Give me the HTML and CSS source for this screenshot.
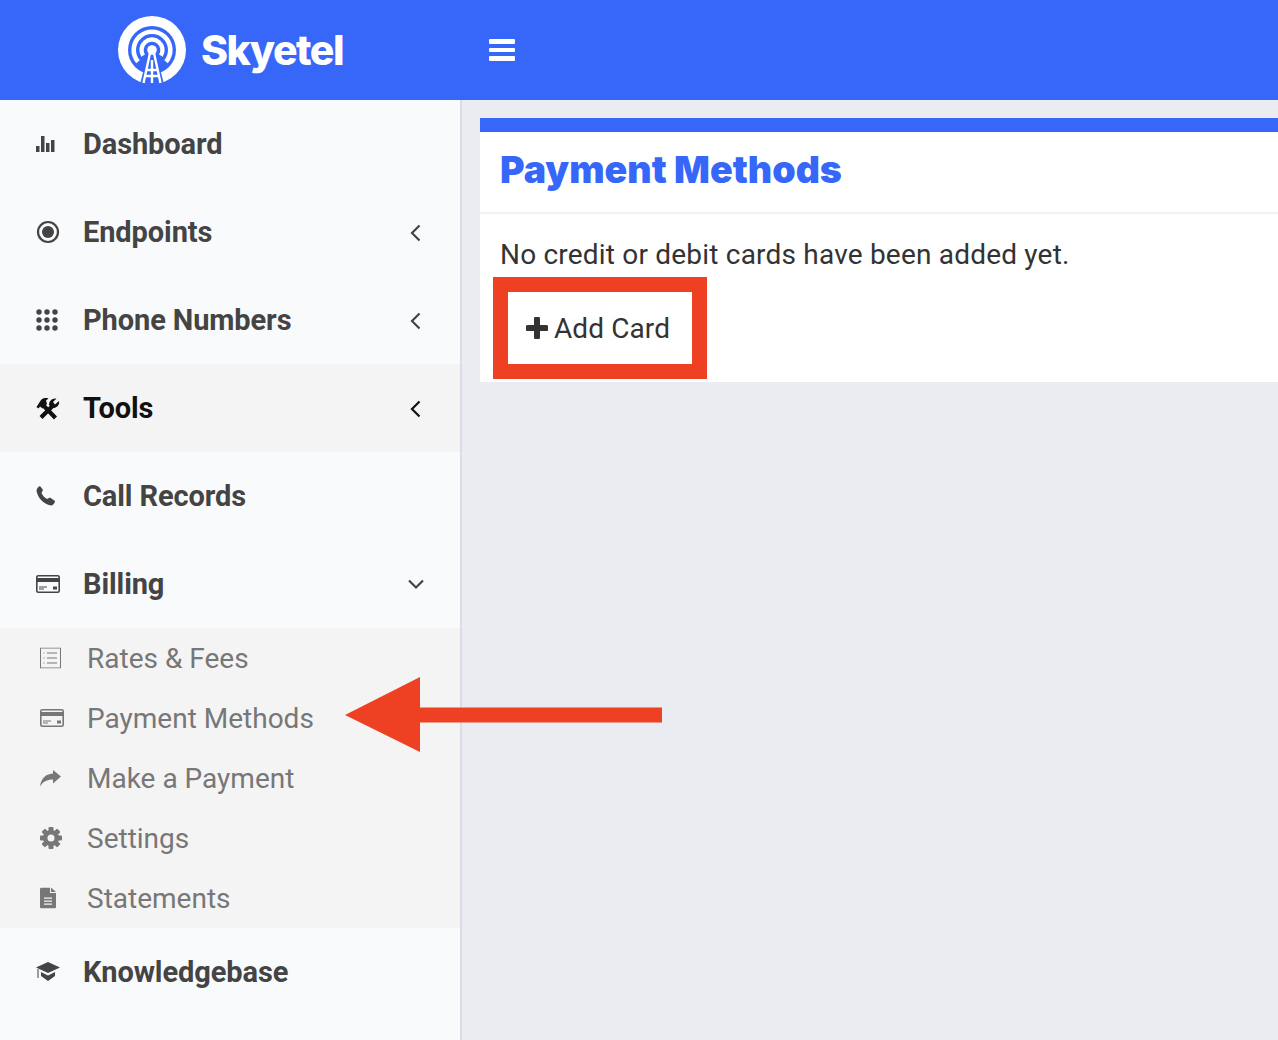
FILE: index.html
```html
<!DOCTYPE html>
<html lang="en">
<head>
  <meta charset="UTF-8" />
  <title>Payment Methods</title>
  <link rel="stylesheet" href="styles.css">
</head>
<body>
  <header class="topbar">
    <div class="brand">
      <svg class="brand-logo" viewBox="0 0 68 68" width="68" height="68">
        <circle cx="34" cy="34" r="34" fill="#fff"/>
        <circle cx="34" cy="34" r="24" fill="#3667f9"/>
        <path d="M20 45.800 A18.300 18.300 0 1 1 48 45.800" fill="none" stroke="#fff" stroke-width="4.600"/>
        <path d="M25.100 39.600 A10.500 10.500 0 1 1 42.900 39.600" fill="none" stroke="#fff" stroke-width="4.400"/>
        <path d="M22 68 L30 38 H38 L46 68 Z" fill="#3667f9"/>
        <circle cx="34" cy="34" r="4.800" fill="#fff"/>
        <path d="M32 37 L25.500 67 M36 37 L42.500 67 M34 44 V67 M29 54 H39 M27.500 60 H40.500" stroke="#fff" stroke-width="2.400" fill="none"/>
      </svg>
      <span class="brand-name">Skyetel</span>
    </div>
    <button class="menu-toggle" aria-label="Menu"><span></span><span></span><span></span></button>
  </header>

  <div class="layout">
    <nav class="sidebar">
      <a class="nav-item">
        <svg class="nav-icon" viewBox="0 0 20 20" width="20" height="20"><path d="M0 12h3.500v6H0zM5 2h3.500v16H5zM10 9h3.500v9H10zM15 6h3.500v12H15z" fill="currentColor"/></svg>
        <span>Dashboard</span>
      </a>
      <a class="nav-item">
        <svg class="nav-icon" viewBox="0 0 24 24" width="24" height="24"><circle cx="12" cy="12" r="10" fill="none" stroke="currentColor" stroke-width="2.200"/><circle cx="12" cy="12" r="6" fill="currentColor"/></svg>
        <span>Endpoints</span>
        <svg class="chev" viewBox="0 0 12 18" width="12" height="18"><path d="M10.500 1.500 L3 9 L10.500 16.500" fill="none" stroke="currentColor" stroke-width="2.200"/></svg>
      </a>
      <a class="nav-item">
        <svg class="nav-icon" viewBox="0 0 22 22" width="22" height="22" fill="currentColor"><circle cx="3" cy="3" r="2.700"/><circle cx="11" cy="3" r="2.700"/><circle cx="19" cy="3" r="2.700"/><circle cx="3" cy="11" r="2.700"/><circle cx="11" cy="11" r="2.700"/><circle cx="19" cy="11" r="2.700"/><circle cx="3" cy="19" r="2.700"/><circle cx="11" cy="19" r="2.700"/><circle cx="19" cy="19" r="2.700"/></svg>
        <span>Phone Numbers</span>
        <svg class="chev" viewBox="0 0 12 18" width="12" height="18"><path d="M10.500 1.500 L3 9 L10.500 16.500" fill="none" stroke="currentColor" stroke-width="2.200"/></svg>
      </a>
      <a class="nav-item is-open">
        <svg class="nav-icon" viewBox="0 0 24 24" width="24" height="24" fill="currentColor"><path d="M7 9 L19.500 22 M5 21.500 L16.500 10" stroke="currentColor" stroke-width="4.200" fill="none"/><path d="M0.500 11 L5 4 C7 2 10 1.500 12.500 2.500 L10 4.500 L11 8 L6.500 12.500 L4 10.500 L2.500 12.500 Z"/><path d="M13 9 C13 5 16 2 20.500 2.500 L17 6 L19 8.500 L23 5 C24 9 20.500 12.500 16 12 Z"/></svg>
        <span>Tools</span>
        <svg class="chev" viewBox="0 0 12 18" width="12" height="18"><path d="M10.500 1.500 L3 9 L10.500 16.500" fill="none" stroke="currentColor" stroke-width="2.200"/></svg>
      </a>
      <a class="nav-item">
        <svg class="nav-icon" viewBox="0 0 20 20" width="20" height="20"><path d="M4 0 L7 4 L5.500 7 C6.500 9.500 8.500 11.500 11 13 L14 11.500 L19 15 C19 17 17 19.500 15 19.500 C7 18 2 12 0.500 5 C0.500 3 2 0.500 4 0 Z" fill="currentColor"/></svg>
        <span>Call Records</span>
      </a>
      <a class="nav-item">
        <svg class="nav-icon" viewBox="0 0 24 18" width="24" height="18"><rect x="0.800" y="0.800" width="22.400" height="16.400" rx="1.500" fill="none" stroke="currentColor" stroke-width="1.600"/><path d="M1 3h22v4H1zM3 11.500h8v1H3zM3 13.500h5v1H3zM17 11.500h4v3h-4z" fill="currentColor"/></svg>
        <span>Billing</span>
        <svg class="chev chev-down" viewBox="0 0 18 12" width="18" height="12"><path d="M2 2.500 L9 9.500 L16 2.500" fill="none" stroke="currentColor" stroke-width="2.200"/></svg>
      </a>

      <div class="subnav">
        <a class="sub-item">
          <svg class="sub-icon" viewBox="0 0 21 21" width="21" height="21"><rect x="0.500" y="0.500" width="20" height="20" fill="none" stroke="currentColor"/><path d="M7 5h10v1H7zM7 10h10v1H7zM7 15h10v1H7zM3.500 5h1v1h-1zM3.500 10h1v1h-1zM3.500 15h1v1h-1z" fill="currentColor"/></svg>
          <span>Rates &amp; Fees</span>
        </a>
        <a class="sub-item">
          <svg class="sub-icon" viewBox="0 0 24 18" width="24" height="18"><rect x="0.800" y="0.800" width="22.400" height="16.400" rx="1.500" fill="none" stroke="currentColor" stroke-width="1.600"/><path d="M1 3h22v4H1zM3 11.500h8v1H3zM3 13.500h5v1H3zM17 11.500h4v3h-4z" fill="currentColor"/></svg>
          <span>Payment Methods</span>
        </a>
        <a class="sub-item">
          <svg class="sub-icon" viewBox="0 0 21 18" width="21" height="18"><path d="M13 1 L21 7.500 L13 14.500 V10.500 C7 10.500 3 12.500 0 17.500 C1 10 5 5 13 4.500 Z" fill="currentColor"/></svg>
          <span>Make a Payment</span>
        </a>
        <a class="sub-item">
          <svg class="sub-icon" viewBox="0 0 22 22" width="22" height="22" fill="currentColor">
            <circle cx="11" cy="11" r="8"/>
            <rect x="8.500" y="0" width="5" height="22" rx="1"/>
            <rect x="8.500" y="0" width="5" height="22" rx="1" transform="rotate(45 11 11)"/>
            <rect x="8.500" y="0" width="5" height="22" rx="1" transform="rotate(90 11 11)"/>
            <rect x="8.500" y="0" width="5" height="22" rx="1" transform="rotate(135 11 11)"/>
            <circle cx="11" cy="11" r="3.500" fill="#f4f4f4"/>
          </svg>
          <span>Settings</span>
        </a>
        <a class="sub-item">
          <svg class="sub-icon" viewBox="0 0 16 21" width="16" height="21"><path d="M1.500 0 H10 V5.500 H16 V19.500 A1.500 1.500 0 0 1 14.500 21 H1.500 A1.500 1.500 0 0 1 0 19.500 V1.500 A1.500 1.500 0 0 1 1.500 0 Z M11 0 L16 4.500 H11 Z" fill="currentColor"/><path d="M4 10h8v1.300H4zM4 13h8v1.300H4zM4 16h8v1.300H4z" fill="#f4f4f4"/></svg>
          <span>Statements</span>
        </a>
      </div>

      <a class="nav-item">
        <svg class="nav-icon" viewBox="0 0 24 20" width="24" height="20" fill="currentColor"><path d="M12 0 L24 5.500 L12 11 L0 5.500 Z"/><path d="M5 10 L12 13.500 L19 10 V14 L12 19 L5 14 Z"/><path d="M1.500 7 H2.500 V16 H1.500 Z"/></svg>
        <span>Knowledgebase</span>
      </a>
    </nav>

    <main class="content">
      <section class="card">
        <h1 class="card-title">Payment Methods</h1>
        <div class="card-body">
          <p>No credit or debit cards have been added yet.</p>
          <button class="add-card">
            <svg viewBox="0 0 22 22" width="22" height="22"><path d="M11 2 V20 M2 11 H20" stroke="currentColor" stroke-width="6" stroke-linecap="round"/></svg>
            Add Card
          </button>
        </div>
      </section>
    </main>
  </div>

  <!-- annotations drawn on top of the screenshot -->
  <div class="callout-box"></div>
  <svg class="callout-arrow" viewBox="0 0 318 76" width="318" height="76"><path d="M0 38 L75 0 V30.500 H317 V45.500 H75 V75 Z" fill="#ee4023"/></svg>
</body>
</html>
```

FILE: styles.css
```css
* {
  box-sizing: border-box;
}
html, body {
  height: 1040px;
  overflow: hidden;
}
body {
  margin: 0;
  font-family: Roboto, "Open Sans", sans-serif;
  background: #ebecf1;
  color: #333;
  position: relative;
}
.topbar {
  height: 100px;
  background: #3667f9;
  display: flex;
  align-items: center;
}
.brand {
  width: 462px;
  padding-left: 118px;
  display: flex;
  align-items: center;
  gap: 15px;
}
.brand-logo {
  display: block;
}
.brand-name {
  font-family: Inter, sans-serif;
  font-weight: 800;
  font-size: 41px;
  letter-spacing: -1.5px;
  color: #fff;
}
.menu-toggle {
  margin-left: 27px;
  width: 26px;
  padding: 0;
  border: none;
  background: none;
  display: flex;
  flex-direction: column;
  gap: 4px;
}
.menu-toggle span {
  height: 4.5px;
  background: #fff;
  border-radius: 1px;
}
.layout {
  display: flex;
  height: 940px;
}
.sidebar {
  width: 462px;
  background: #f9fafc;
  border-right: 2px solid #d8dde6;
  flex: none;
}
.nav-item {
  height: 88px;
  display: flex;
  align-items: center;
  color: #444;
  font-size: 29px;
  font-weight: 700;
  letter-spacing: -0.1px;
  position: relative;
  padding-left: 83px;
}
.nav-item.is-open {
  background: #f4f4f4;
  color: #111;
}
.nav-icon {
  position: absolute;
  left: 36px;
  top: 50%;
  transform: translateY(-50%);
}
.chev {
  position: absolute;
  left: 409px;
  top: 36px;
}
.chev-down {
  left: 407px;
  top: 38px;
}
.subnav {
  background: #f4f4f4;
  height: 300px;
}
.sub-item {
  height: 60px;
  display: flex;
  align-items: center;
  color: #777;
  font-size: 28px;
  position: relative;
  padding-left: 87px;
}
.sub-icon {
  position: absolute;
  left: 40px;
  top: 50%;
  transform: translateY(-50%);
}
.content {
  flex: 1;
  padding: 18px 0 0 18px;
}
.card {
  background: #fff;
  border-top: 14px solid #3667f9;
  height: 264px;
}
.card-title {
  margin: 0;
  height: 82px;
  padding: 0 0 6px 20px;
  display: flex;
  align-items: center;
  border-bottom: 2px solid #f2f2f4;
  font-family: Inter, sans-serif;
  font-weight: 900;
  font-size: 37.500px;
  color: #3667f9;
}
.card-body {
  padding: 0 20px;
}
.card-body p {
  margin: 0;
  padding-top: 23px;
  height: 65px;
  font-size: 28px;
  line-height: 36px;
  letter-spacing: 0.2px;
}
.add-card {
  margin-left: 6px;
  height: 72px;
  margin-top: 13px;
  padding: 0 0 0 20px;
  border: none;
  background: none;
  display: flex;
  align-items: center;
  gap: 6px;
  font-family: inherit;
  font-size: 28px;
  letter-spacing: 0.1px;
  color: #333;
}
.callout-box {
  position: absolute;
  left: 493px;
  top: 277px;
  width: 214px;
  height: 102px;
  border: 15px solid #ee4023;
}
.callout-arrow {
  position: absolute;
  left: 345px;
  top: 677px;
}
```
